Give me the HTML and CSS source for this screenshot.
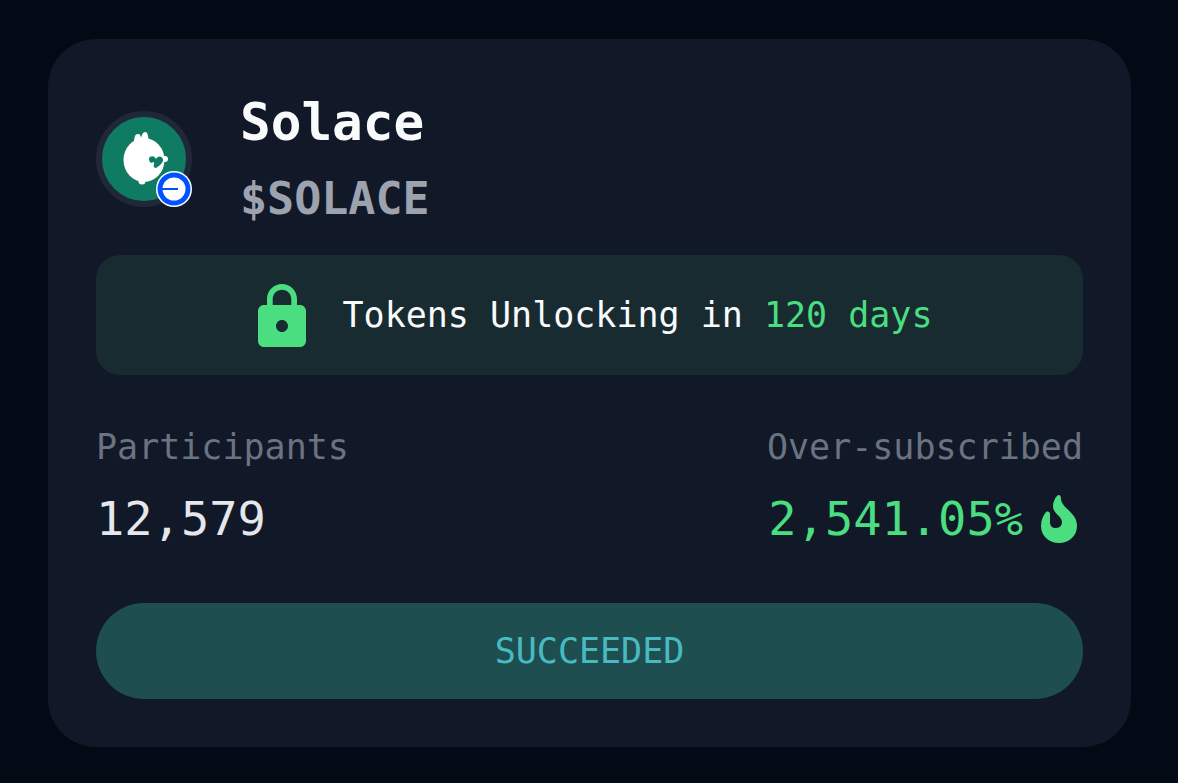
FILE: index.html
```html
<!doctype html>
<html lang="en">
<head>
    <meta charset="utf-8">
    <meta name="viewport" content="width=device-width, initial-scale=1">
    <title>Solace</title>
    <link rel="stylesheet" href="styles.css">
</head>
<body>
    <main class="card">
        <header class="project">
            <div class="avatar">
                <svg class="logo" viewBox="0 0 96 96" aria-hidden="true">
                    <circle cx="48" cy="48" r="45" fill="#0f7b62" stroke="#202736" stroke-width="6"/>
                    <ellipse cx="48" cy="49" rx="20.500" ry="22" fill="#fff"/>
                    <path fill="#fff" d="M38 33C38 26 39 23 42 23C44 23 45 25 45 27C46 23 47 21 49 21C52 21 52 25 53 31Z"/>
                    <circle cx="69" cy="48" r="3" fill="#fff"/>
                    <circle cx="46" cy="70" r="3.500" fill="#fff"/>
                    <path fill="#0f7b62" d="M53 48C53 45 58 44 60 48C62 44 67 45 67 49C67 52 63 55 60 57C58 57 57 55 58 53C59 51 57 51 55 52C54 51 53 50 53 48Z"/>
                </svg>
                <svg class="chain" viewBox="0 0 36 36" aria-hidden="true">
                    <circle cx="18" cy="18" r="18" fill="#fff"/>
                    <circle cx="18" cy="18" r="16.500" fill="#0052ff"/>
                    <circle cx="18" cy="18" r="11.500" fill="#fff"/>
                    <path fill="#0052ff" d="M5 17H22V19H5Z"/>
                </svg>
            </div>
            <div>
                <h1 class="name">Solace</h1>
                <p class="ticker">$SOLACE</p>
            </div>
        </header>

        <div class="unlock">
            <svg class="lock" viewBox="4 1 16 21" aria-hidden="true">
                <path fill="currentColor" d="M18 8h-1V6c0-2.76-2.24-5-5-5S7 3.24 7 6v2H6c-1.1 0-2 .9-2 2v10c0 1.1.9 2 2 2h12c1.1 0 2-.9 2-2V10c0-1.1-.9-2-2-2zm-6 9c-1.1 0-2-.9-2-2s.9-2 2-2 2 .9 2 2-.9 2-2 2zm3.1-9H8.900V6c0-1.710 1.390-3.100 3.100-3.100s3.100 1.390 3.100 3.100v2z"/>
            </svg>
            <p class="unlock-text">Tokens Unlocking in <span class="green">120 days</span></p>
        </div>

        <dl class="stats">
            <div>
                <dt class="label">Participants</dt>
                <dd class="value">12,579</dd>
            </div>
            <div class="right">
                <dt class="label">Over-subscribed</dt>
                <dd class="value green">2,541.05%
                    <svg class="flame" viewBox="0 0 36 48" aria-hidden="true">
                        <path fill="currentColor" d="M16 1C18 -1 20 0 20 4C21 14 36 17 36 31C36 41 28 48 18 48C8 48 0 41 0 31C0 25 2 21 5 17C7 16 9 17 9 19V27C9 31 11 33 15 33C19 33 21 30 21 27C21 21 12 19 12 11C12 7 14 3 16 1Z"/>
                    </svg>
                </dd>
            </div>
        </dl>

        <button class="status" type="button">SUCCEEDED</button>
    </main>
</body>
</html>
```
FILE: styles.css
```css
* {
    box-sizing: border-box;
}

body {
    margin: 0;
    padding: 39px 47px 36px 48px;
    background-color: #040a15;
    color: #f9fafb;
    font-family: "DejaVu Sans Mono", monospace;
    font-size: 35px;
    line-height: 48px;
}

h1, p, dl, dd {
    margin: 0;
}

svg {
    display: block;
    flex: none;
}

.card {
    padding: 48px;
    border-radius: 48px;
    background-color: #111827;
}

.project {
    display: flex;
    align-items: center;
    gap: 48px;
    margin-bottom: 24px;
}

.avatar {
    position: relative;
    width: 96px;
    height: 96px;
}

.logo {
    width: 96px;
    height: 96px;
}

/* network badge over the avatar */
.chain {
    position: absolute;
    right: 0;
    bottom: 0;
    width: 36px;
    height: 36px;
}

.name {
    font-size: 51px;
    line-height: 72px;
    font-weight: bold;
}

.ticker {
    padding-top: 8px;
    font-size: 45px;
    line-height: 64px;
    font-weight: bold;
    color: #9ca3af;
}

.unlock {
    display: flex;
    align-items: center;
    justify-content: center;
    gap: 36px;
    min-height: 120px;
    padding: 24px 24px 24px 36px;
    border-radius: 24px;
    background-color: #182b30;
}

.lock {
    width: 48px;
    height: 63px;
    color: #4ade80;
}

.green {
    color: #4ade80;
}

.stats {
    display: flex;
    justify-content: space-between;
    margin: 48px 0;
}

.right {
    text-align: right;
}

.label {
    color: #6b7280;
}

.value {
    display: flex;
    align-items: center;
    gap: 18px;
    margin-top: 12px;
    font-size: 47px;
    line-height: 72px;
    color: #e5e7eb;
}

.right .value {
    justify-content: flex-end;
    padding-right: 6px;
    color: #4ade80;
}

.flame {
    width: 36px;
    height: 48px;
}

.status {
    display: block;
    width: 100%;
    padding: 24px;
    border: none;
    border-radius: 48px;
    background-color: #1f4e51;
    color: #48bbc2;
    font: inherit;
    cursor: pointer;
}
```
